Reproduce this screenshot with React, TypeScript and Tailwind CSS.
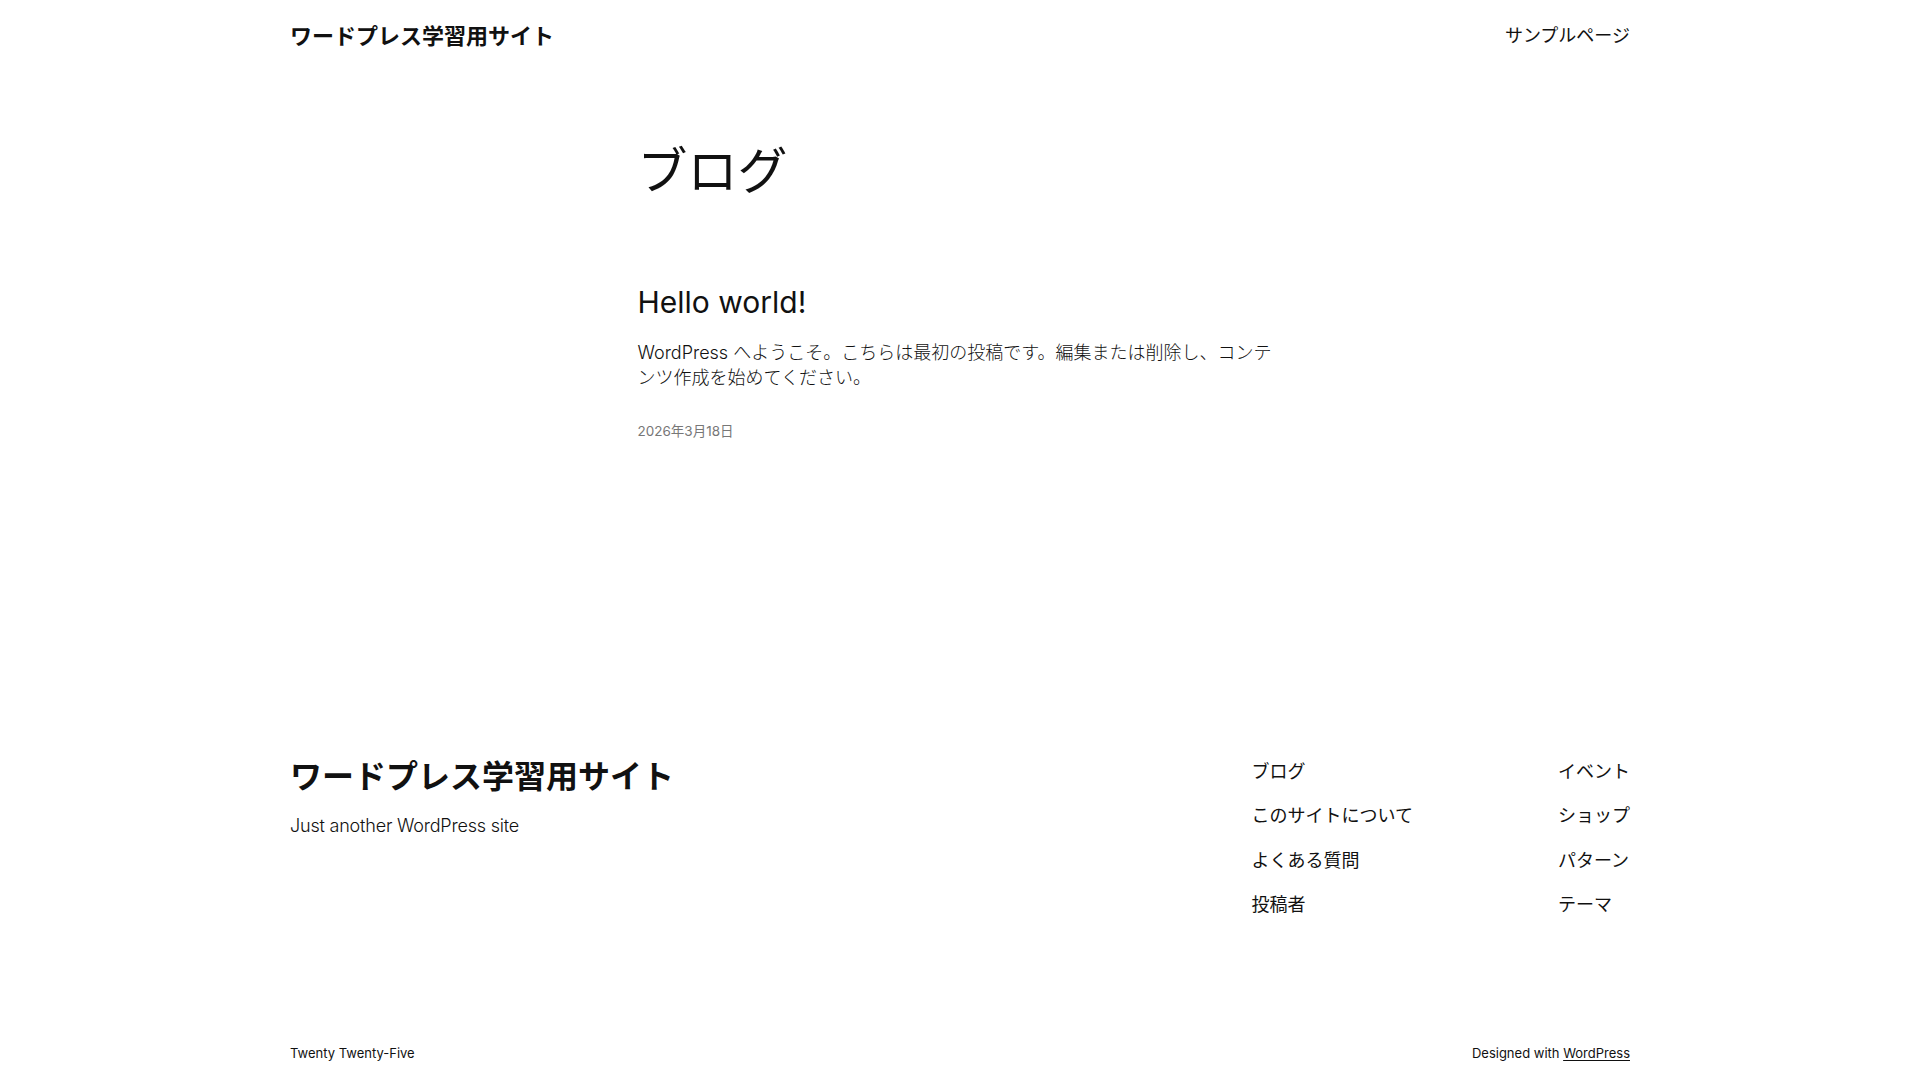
import React from "react";

const font = { fontFamily: '"Inter", "Noto Sans CJK JP", sans-serif' };

export default function App() {
  return (
    <div
      className="min-h-[1080px] w-full bg-white text-[#111111] flex flex-col"
      style={font}
    >
      <header className="w-full">
        <div className="mx-auto max-w-[1340px] h-[71px] flex items-center justify-between">
          <a className="text-[22px] font-semibold leading-none">
            ワードプレス学習用サイト
          </a>
          <nav>
            <a className="text-[18px] leading-none">サンプルページ</a>
          </nav>
        </div>
      </header>

      <main className="w-full flex-1">
        <div className="mx-auto w-[645px]">
          <h1 className="mt-[70px] text-[50px] font-normal leading-[60px]">ブログ</h1>
          <article className="mt-[83px]">
            <h2 className="text-[30px] font-normal leading-[36px]">
              Hello world!
            </h2>
            <p className="mt-[20px] text-[18px] leading-[25px] font-light">
              WordPress へようこそ。こちらは最初の投稿です。編集または削除し、コンテンツ作成を始めてください。
            </p>
            <div className="mt-[31px] text-[13.5px] leading-[20px] text-[#777777]">
              2026年3月18日
            </div>
          </article>
        </div>
      </main>

      <footer className="w-full">
        <div className="mx-auto max-w-[1340px] flex justify-between items-start">
          <div>
            <div className="text-[32px] font-semibold leading-[38px]">
              ワードプレス学習用サイト
            </div>
            <p className="mt-[17px] text-[18px] leading-[25px] font-light tracking-[-0.2px]">
              Just another WordPress site
            </p>
          </div>
          <div className="flex gap-[145px] pt-[1px]">
            <ul className="flex flex-col gap-[19.5px] text-[18px] leading-[25px]">
              <li>ブログ</li>
              <li>このサイトについて</li>
              <li>よくある質問</li>
              <li>投稿者</li>
            </ul>
            <ul className="flex flex-col gap-[19.5px] text-[18px] leading-[25px]">
              <li>イベント</li>
              <li>ショップ</li>
              <li>パターン</li>
              <li>テーマ</li>
            </ul>
          </div>
        </div>
        <div className="mx-auto max-w-[1340px] mt-[126px] h-[37px] flex justify-between items-start text-[13px] leading-[20px]">
          <span>Twenty Twenty-Five</span>
          <span>
            Designed with <a className="underline underline-offset-2">WordPress</a>
          </span>
        </div>
      </footer>
    </div>
  );
}
